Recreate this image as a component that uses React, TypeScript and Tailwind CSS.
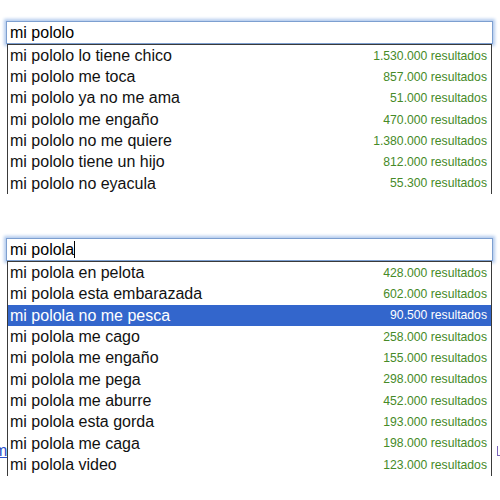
const pololo: [string, string][] = [
  ['mi pololo lo tiene chico', '1.530.000'],
  ['mi pololo me toca', '857.000'],
  ['mi pololo ya no me ama', '51.000'],
  ['mi pololo me engaño', '470.000'],
  ['mi pololo no me quiere', '1.380.000'],
  ['mi pololo tiene un hijo', '812.000'],
  ['mi pololo no eyacula', '55.300'],
];

const polola: [string, string][] = [
  ['mi polola en pelota', '428.000'],
  ['mi polola esta embarazada', '602.000'],
  ['mi polola no me pesca', '90.500'],
  ['mi polola me cago', '258.000'],
  ['mi polola me engaño', '155.000'],
  ['mi polola me pega', '298.000'],
  ['mi polola me aburre', '452.000'],
  ['mi polola esta gorda', '193.000'],
  ['mi polola me caga', '198.000'],
  ['mi polola video', '123.000'],
];

function SuggestBox({ query, rows, selected, caret }: { query: string; rows: [string, string][]; selected?: number; caret?: boolean }) {
  return (
    <div className="relative z-10">
      {/* Input */}
      <div className="h-[23px] border border-[#7d9fd0] bg-white shadow-[0_0_3px_2px_#b3cbee] flex items-center pl-[3px] text-[16px] text-black">
        <span>{query}</span>
        {caret && <span className="w-px h-[17px] bg-black" />}
      </div>

      {/* Suggestions */}
      <div className="mx-px border-x border-t border-[#3a3a3a] bg-white">
        {rows.map(([text, count], i) => {
          const isSel = i === selected;
          return (
            <div
              key={text}
              className={`h-[21.33px] flex items-center justify-between pl-[2px] pr-[4px] ${isSel ? 'bg-[#3366cc] text-white' : 'text-[#111]'}`}
            >
              <span className="text-[16px] whitespace-nowrap">{text}</span>
              <span className={`text-[12.2px] whitespace-nowrap ${isSel ? 'text-white' : 'text-[#468a28]'}`}>
                {count} resultados
              </span>
            </div>
          );
        })}
      </div>
    </div>
  );
}

export default function App() {
  return (
    <div className="relative w-[500px] h-[500px] overflow-hidden bg-white font-['Liberation_Sans',Arial,sans-serif]">
      {/* bits of the page behind the dropdown */}
      <span className="absolute left-[-6px] top-[439px] text-[16px] text-[#2a4fc9] underline">m</span>
      <div className="absolute left-[497px] top-[446px] w-[4px] h-[10px] border-l border-b border-[#7a64b8]" />

      <div className="pt-[21px] pl-[6px] w-[493px]">
        <SuggestBox query="mi pololo" rows={pololo} />
        <div className="h-[44px]" />
        <SuggestBox query="mi polola" rows={polola} selected={2} caret />
      </div>
    </div>
  );
}
